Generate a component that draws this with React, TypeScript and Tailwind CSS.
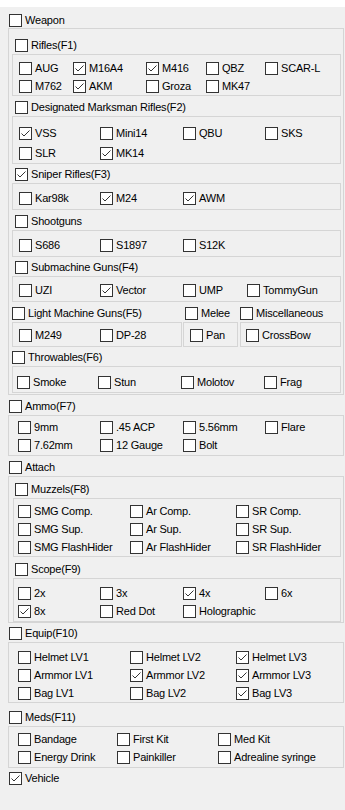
import React from 'react';

type Item = { label: string; checked?: boolean };

const it = (label: string, checked = false): Item => ({ label, checked });

function Box({ checked }: { checked?: boolean }) {
  return (
    <span className="flex h-[13px] w-[13px] shrink-0 items-center justify-center border border-[#333333] bg-white">
      {checked && (
        <svg width="11" height="11" viewBox="0 0 11 11" fill="none">
          <path d="M1.5 5.5 L4 8 L9.5 2.5" stroke="#333333" strokeWidth="1" />
        </svg>
      )}
    </span>
  );
}

function Check({ label, checked, row = 'h-[18px]' }: Item & { row?: string }) {
  return (
    <div className={`flex items-center whitespace-nowrap ${row}`}>
      <Box checked={checked} />
      <span className="ml-[3px] leading-none">{label}</span>
    </div>
  );
}

function Header({ label, checked, className = '' }: Item & { className?: string }) {
  return (
    <div className={`flex h-[20px] items-center ${className}`}>
      <Box checked={checked} />
      <span className="ml-[3px] leading-none whitespace-nowrap">{label}</span>
    </div>
  );
}

function Group({ box, cols, items, row }: { box: string; cols: string; items: Item[]; row?: string }) {
  return (
    <div className={`grid border border-[#d5d5d5] ${cols} ${box}`}>
      {items.map((i) => (
        <Check key={i.label} {...i} row={row} />
      ))}
    </div>
  );
}

export default function App() {
  return (
    <div className="min-h-screen w-[345px] overflow-hidden bg-[#f0f0f0] pb-[20px] font-['Liberation_Sans',Arial,sans-serif] text-[11px] tracking-[-0.2px] text-black">
      <div className="h-[7px] bg-white" />

      {/* Weapon */}
      <Header label="Weapon" className="mt-[3px] pl-[9px]" />
      <div className="-mt-[2px] ml-[8px] w-[336px] border border-[#d5d5d5] pt-[6px] pb-[1px]">
        <Header label="Rifles(F1)" className="pl-[6px]" />
        <Group
          box="-mt-px ml-[3px] mr-[2px] pl-[6px] pt-[4px]"
          cols="grid-cols-[54px_73px_60px_59px_1fr]"
          items={[it('AUG'), it('M16A4', true), it('M416', true), it('QBZ'), it('SCAR-L'), it('M762'), it('AKM', true), it('Groza'), it('MK47')]}
        />

        <Header label="Designated Marksman Rifles(F2)" className="mt-px pl-[6px]" />
        <Group
          box="-mt-px ml-[3px] mr-[2px] pl-[6px] pt-[6px]"
          cols="grid-cols-[81px_83px_82px_1fr]"
          row="h-[20px]"
          items={[it('VSS', true), it('Mini14'), it('QBU'), it('SKS'), it('SLR'), it('MK14', true)]}
        />

        <Header label="Sniper Rifles(F3)" checked className="pl-[6px]" />
        <Group
          box="-mt-px ml-[3px] mr-[2px] pl-[6px] pt-[5px] pb-[2px]"
          cols="grid-cols-[81px_83px_82px_1fr]"
          items={[it('Kar98k'), it('M24', true), it('AWM', true)]}
        />

        <Header label="Shootguns" className="mt-px pl-[6px]" />
        <Group
          box="-mt-px ml-[3px] mr-[2px] pl-[6px] pt-[5px] pb-[2px]"
          cols="grid-cols-[81px_83px_82px_1fr]"
          items={[it('S686'), it('S1897'), it('S12K')]}
        />

        <Header label="Submachine Guns(F4)" className="pl-[6px]" />
        <Group
          box="-mt-px ml-[3px] mr-[2px] pl-[6px] pt-[4px] pb-[2px]"
          cols="grid-cols-[81px_83px_64px_1fr]"
          items={[it('UZI'), it('Vector', true), it('UMP'), it('TommyGun')]}
        />

        <div className="mt-px ml-[3px] mr-[2px] flex">
          <div className="w-[170px]">
            <Header label="Light Machine Guns(F5)" />
            <Group box="-mt-px pl-[6px] pt-[3px] pb-[2px]" cols="grid-cols-[81px_1fr]" items={[it('M249'), it('DP-28')]} />
          </div>
          <div className="ml-px w-[55px]">
            <Header label="Melee" className="pl-[2px]" />
            <Group box="-mt-px pl-[6px] pt-[3px] pb-[2px]" cols="grid-cols-1" items={[it('Pan')]} />
          </div>
          <div className="ml-[2px] flex-1">
            <Header label="Miscellaneous" />
            <Group box="-mt-px pl-[5px] pt-[3px] pb-[2px]" cols="grid-cols-1" items={[it('CrossBow')]} />
          </div>
        </div>

        <Header label="Throwables(F6)" className="pl-[3px]" />
        <Group
          box="-mt-px ml-[3px] mr-[2px] pl-[4px] pt-[6px] pb-px"
          cols="grid-cols-[81px_83px_83px_1fr]"
          items={[it('Smoke'), it('Stun'), it('Molotov'), it('Frag')]}
        />
      </div>

      {/* Ammo */}
      <Header label="Ammo(F7)" className="mt-px pl-[9px]" />
      <Group
        box="-mt-px ml-[8px] w-[336px] pl-[9px] pt-[2px] pb-px"
        cols="grid-cols-[82px_83px_82px_1fr]"
        items={[it('9mm'), it('.45 ACP'), it('5.56mm'), it('Flare'), it('7.62mm'), it('12 Gauge'), it('Bolt')]}
      />

      {/* Attach */}
      <Header label="Attach" className="mt-px pl-[9px]" />
      <div className="-mt-px ml-[8px] w-[336px] border border-[#d5d5d5] pt-[2px]">
        <Header label="Muzzels(F8)" className="pl-[6px]" />
        <Group
          box="-mt-px ml-[4px] mr-[2px] pl-[4px] pt-[3px]"
          cols="grid-cols-[112px_106px_1fr]"
          items={[
            it('SMG Comp.'), it('Ar Comp.'), it('SR Comp.'),
            it('SMG Sup.'), it('Ar Sup.'), it('SR Sup.'),
            it('SMG FlashHider'), it('Ar FlashHider'), it('SR FlashHider'),
          ]}
        />

        <Header label="Scope(F9)" className="mt-[2px] pl-[6px]" />
        <Group
          box="-mt-px ml-[4px] mr-[2px] pl-[4px] pt-[5px] pb-px"
          cols="grid-cols-[82px_83px_82px_1fr]"
          items={[it('2x'), it('3x'), it('4x', true), it('6x'), it('8x', true), it('Red Dot'), it('Holographic')]}
        />
      </div>

      {/* Equip */}
      <Header label="Equip(F10)" className="pl-[9px]" />
      <Group
        box="-mt-px ml-[8px] w-[336px] pl-[9px] pt-[5px]"
        cols="grid-cols-[112px_106px_1fr]"
        items={[
          it('Helmet LV1'), it('Helmet LV2'), it('Helmet LV3', true),
          it('Armmor LV1'), it('Armmor LV2', true), it('Armmor LV3', true),
          it('Bag LV1'), it('Bag LV2'), it('Bag LV3', true),
        ]}
      />

      {/* Meds */}
      <Header label="Meds(F11)" className="mt-[4px] pl-[9px]" />
      <Group
        box="-mt-px ml-[8px] w-[336px] pl-[9px] pt-[3px] pb-px"
        cols="grid-cols-[99px_101px_1fr]"
        items={[it('Bandage'), it('First Kit'), it('Med Kit'), it('Energy Drink'), it('Painkiller'), it('Adrealine syringe')]}
      />

      <Header label="Vehicle" checked className="pl-[9px]" />
    </div>
  );
}
